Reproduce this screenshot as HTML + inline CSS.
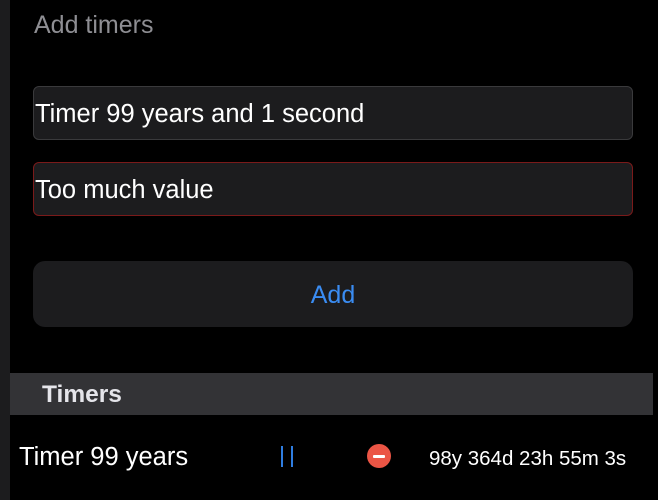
<!DOCTYPE html>
<html><head><style>
body{margin:0;width:658px;height:500px;background:#000;position:relative;overflow:hidden;font-family:"Liberation Sans",sans-serif;}
.side{position:absolute;left:0;top:0;width:10px;height:500px;background:#1c1c1e}
.abs{position:absolute}
.inp{position:absolute;left:33px;width:598px;height:52px;background:#1c1c1e;border:1px solid #3a3a3c;border-radius:6px;color:#fff;font-size:25.5px;line-height:54px;box-sizing:content-box}
</style></head><body>
<div class="side"></div>
<div class="abs" style="left:34px;top:11px;font-size:25px;color:#8e8e93">Add timers</div>
<div class="inp" style="top:86px;"><span style="margin-left:1px">Timer 99 years and 1 second</span></div>
<div class="inp" style="top:162px;border-color:#7a1a1a"><span style="margin-left:1px">Too much value</span></div>
<div class="abs" style="left:33px;top:261px;width:600px;height:66px;background:#1c1c1e;border-radius:12px;color:#3a8cf2;font-size:25px;text-align:center;line-height:68px">Add</div>
<div class="abs" style="left:10px;top:373px;width:643px;height:42px;background:#333336;"></div>
<div class="abs" style="left:42px;top:381px;font-size:24.5px;color:#e5e5ea;font-weight:bold">Timers</div>
<div class="abs" style="left:10px;top:415px;width:643px;height:82px;background:#000"></div>
<div class="abs" style="left:19px;top:443px;font-size:25.5px;color:#fff">Timer 99 years</div>
<div class="abs" style="left:281px;top:446px;width:2px;height:21px;background:#2f7de0"></div>
<div class="abs" style="left:291px;top:446px;width:2px;height:21px;background:#2f7de0"></div>
<div class="abs" style="left:367px;top:444px;width:24px;height:24px;border-radius:50%;background:#eb5545"></div>
<div class="abs" style="left:373px;top:455px;width:12px;height:3px;background:#fff;border-radius:1px"></div>
<div class="abs" style="left:429px;top:447px;font-size:20.5px;color:#fff">98y 364d 23h 55m 3s</div>
</body></html>
